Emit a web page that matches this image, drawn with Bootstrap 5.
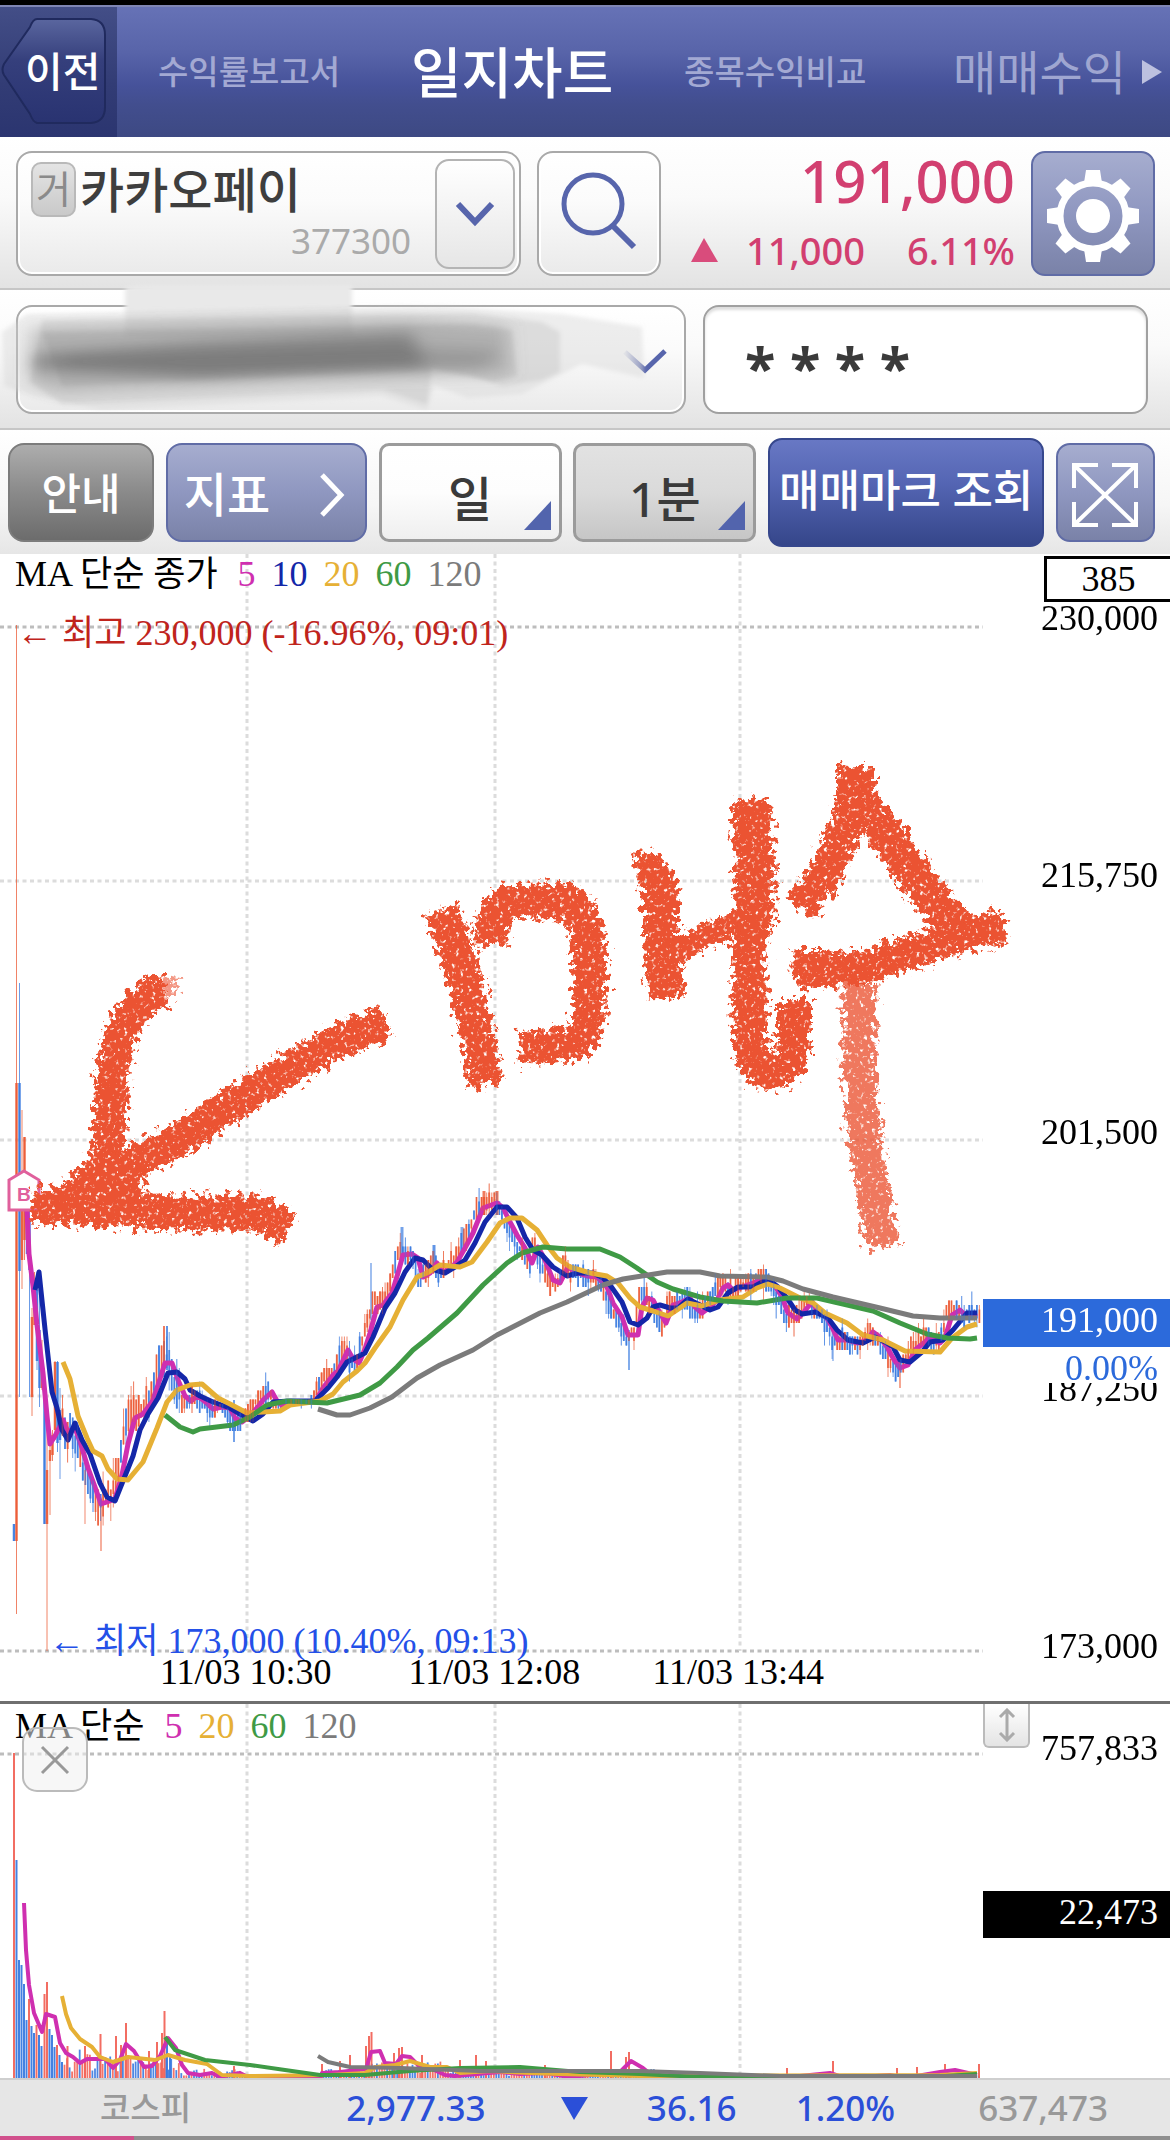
<!DOCTYPE html>
<html lang="ko">
<head>
<meta charset="utf-8">
<meta name="viewport" content="width=device-width, initial-scale=1">
<title>일지차트</title>
<link rel="stylesheet" href="https://cdn.jsdelivr.net/npm/bootstrap@5.3.0/dist/css/bootstrap.min.css">
<style>
  :root{--ui:"Noto Sans","Noto Sans CJK KR",sans-serif;--num:"Liberation Serif","Noto Sans CJK KR",serif}
  body{font-family:var(--ui);background:#fff;color:#333;overflow-x:hidden}
  button,input,select{font-family:inherit}
  .topstrip{height:5px;background:#000}
  .appbar{height:132px;background:linear-gradient(#6672b6 0,#5864a9 35%,#46529a 60%,#424e8e 75%,#3d4983);border-top:2px solid #7f86b4}
  .back-cell{width:117px;height:130px;background:linear-gradient(#434e87,#323c75 60%,#2b3570)}
  .back-btn{width:117px;height:130px;border:0;padding:0 0 0 25px;background:none;color:#fff;font-size:41px;font-weight:500;text-align:left}
  .back-btn svg{position:absolute;left:0;top:0}
  .back-btn span{position:relative;line-height:60px}
  .tabs-row{padding:0 8px 0 41px}
  .tab-sm,.tab-md,.tab-on{text-decoration:none;white-space:nowrap;line-height:60px}
  .tab-sm{font-size:33px;color:#a3a9d3;font-weight:500}
  .tab-md{font-size:47px;color:#9fa6d1}
  .tab-on{font-size:55px;color:#fff;font-weight:500}
  .band{background:linear-gradient(#fff,#fafafa 40%,#e3e3e3);border-bottom:2px solid #c6c6c6}
  .band-quote{height:153px;padding:14px 15px 12px 16px;gap:16px}
  .band-acct{height:140px;padding:15px 22px 14px 16px}
  .band-tools{height:124px;padding:7px 15px 6px 8px;border-bottom:0;background:linear-gradient(#fff,#f6f6f6 60%,#e6e6e6)}
  .bx{border:2px solid #a9a9a9;border-radius:16px;background:linear-gradient(#fff,#fbfbfb 40%,#eaeaea);box-shadow:inset 0 0 0 2px #fff}
  .stock{width:505px;height:125px;padding:0 4px 0 13px}
  .mkt{width:45px;height:55px;border:2px solid #b9b9b9;border-radius:10px;background:linear-gradient(#e4e4e4,#c9c9c9);color:#8a8a8a;font-size:38px;line-height:49px;text-align:center}
  .stock-name{font-size:48px;line-height:55px;color:#3e3e3e;font-weight:500}
  .stock-code{font-size:35px;line-height:48px;color:#aaa}
  .drop{width:80px;height:110px;border:2px solid #b4b4b4;border-radius:14px;background:linear-gradient(#fff,#e6e6e6)}
  .sq{width:124px;height:125px}
  .blue-soft{border:2px solid #606ca6;border-radius:14px;background:linear-gradient(#a6adcf,#8f97c0 50%,#7a82a8);color:#fff}
  .pink{color:#d23f70}
  .price{font-size:58px;line-height:60px;font-weight:500}
  .chg{font-size:38px;line-height:44px;font-weight:500;padding-top:17px;gap:42px}
  .acct{width:670px;height:109px}
  .acct svg{position:absolute;left:-34px;top:-42px;pointer-events:none}
  .pw{width:445px;height:109px;border:2px solid #a0a0a0;border-radius:16px;padding:12px 0 0 40px;font-size:56px;line-height:84px;font-weight:700;color:#3a3a3a;background:#fff;box-shadow:inset 0 3px 3px #ddd}
  .tool{height:99px;font-weight:500;padding:4px 0 0}
  .t-guide{width:146px;font-size:43px;color:#fff;border:2px solid #7c7c7c;border-radius:16px;background:linear-gradient(#adadad,#8d8d8d 45%,#6c6c6c)}
  .t-ind{width:201px;font-size:47px;border-radius:16px}
  .t-sel{width:183px;font-size:48px;color:#3a3a3a;border:3px solid #9b9b9b;border-radius:10px;appearance:none;-webkit-appearance:none;text-align:center;text-align-last:center;padding:12px 0 0}
  .t-day{background:linear-gradient(#fff,#fdfdfd 50%,#efefef)}
  .t-min{background:linear-gradient(#e2e2e2,#dadada 50%,#c6c6c6)}
  .corner{position:absolute;right:11px;bottom:12px;pointer-events:none}
  .t-query{width:276px;height:109px;border:2px solid #36478c;border-radius:14px;font-size:44px;font-weight:500;color:#fff;white-space:nowrap;background:linear-gradient(#6878c4,#5566b4 40%,#35468a);padding:0 0 6px}
  .t-full{width:99px}
  .panel{font-family:var(--num);font-size:36px;line-height:40px;color:#000}
  .ko{font-size:35px}
  .main-chart{height:1147px}
  .vol-chart{height:374px;border-top:0}
  .split{height:3px;background:#6f6f6f}
  .axis{width:187px}
  .plot svg{position:absolute;left:0;top:0;width:100%;height:100%;overflow:visible}
  .over{position:absolute;white-space:nowrap}
  .b-mark{left:17px;top:626px;font:700 19px/30px "Liberation Sans",sans-serif;color:#e0609c}
  .legend-row{position:absolute;left:15px;gap:16px;white-space:nowrap}
  .m5{color:#cf2fb0}.m10{color:#1427a8}.m20{color:#e6b035}.m60{color:#3f9a45}.m120{color:#7b7b7b}
  .axis-list{padding-top:44px}
  .axis-list li{height:257px;padding-right:12px;text-align:right}
  .count-box{position:absolute;left:61px;right:0;top:2px;height:46px;border:3px solid #000;border-right:0;text-align:center;background:#fff}
  .now-box{position:absolute;left:0;right:0;top:745px;height:84px;background:#fff;text-align:right}
  .now-box b{display:block;height:48px;line-height:42px;background:#2c6adb;color:#fff;font-weight:400;padding-right:12px}
  .now-box i{display:block;height:36px;line-height:42px;font-style:normal;color:#2c6adb;padding-right:12px}
  .close-x{left:22px;top:23px;width:66px;height:65px;border:2px solid #bbb;border-radius:15px;background:rgba(240,240,240,.55);padding:0}
  .grip{width:47px;height:44px;border:2px solid #bbb;border-top:0;border-radius:0 0 6px 6px;background:linear-gradient(#fff,#e4e4e4);padding:0}
  .vol-now{top:187px;left:0;right:0;height:47px;line-height:42px;background:#000;color:#fff;text-align:right;padding-right:12px}
  .ticker{height:58px;background:#e6e6e6;border-top:2px solid #cfcfcf;font-size:35px;line-height:56px;padding:0 62px 0 100px;color:#2b4fd8;font-weight:500}
  .ticker .dim{color:#999}
  .idx-name{font-size:33px}
  .bottomstrip{height:4px;background:linear-gradient(90deg,#d1508c 134px,#8f8f8f 134px)}
</style>
</head>
<body>
<div class="topstrip"></div>
<header class="appbar d-flex">
  <div class="back-cell flex-shrink-0">
    <button class="back-btn position-relative" type="button">
      <svg width="117" height="130" viewBox="0 0 117 130"><defs><linearGradient id="bk" x2="0" y2="1"><stop offset="0" stop-color="#5a669f"/><stop offset=".4" stop-color="#353f7c"/><stop offset="1" stop-color="#293371"/></linearGradient></defs><path d="M37 12H91Q105 13 105 28V100Q105 115 91 116H37Q33 115 30 107L4 68Q1 63 4 57L30 20Q33 12 37 12Z" fill="url(#bk)" stroke="#202a5e" stroke-width="2"/></svg>
      <span>이전</span>
    </button>
  </div>
  <nav class="tabs-row d-flex align-items-center justify-content-between flex-grow-1">
    <a class="tab-sm" href="#">수익률보고서</a>
    <a class="tab-on" href="#">일지차트</a>
    <a class="tab-sm" href="#">종목수익비교</a>
    <span class="d-flex align-items-center gap-3 ps-3"><a class="tab-md" href="#">매매수익</a>
    <svg width="20" height="24" viewBox="0 0 20 24"><path d="M0 0L20 12L0 24Z" fill="#bdc1df"/></svg></span>
  </nav>
</header>

<section class="band band-quote d-flex">
  <div class="bx stock d-flex justify-content-between align-items-center">
    <div class="flex-grow-1 pe-4">
      <div class="d-flex align-items-center gap-1"><span class="mkt">거</span><span class="stock-name">카카오페이</span></div>
      <div class="stock-code text-end">377300</div>
    </div>
    <button class="drop" type="button" aria-label="종목 선택"><svg width="40" height="28" viewBox="0 0 40 28"><path d="M3 4L20 22L37 4" fill="none" stroke="#5765ac" stroke-width="6"/></svg></button>
  </div>
  <button class="bx sq p-0" type="button" aria-label="검색"><svg width="80" height="84" viewBox="0 0 80 84"><circle cx="34" cy="32" r="29" fill="none" stroke="#5765ac" stroke-width="5"/><path d="M53 53L75 75" stroke="#5765ac" stroke-width="6"/></svg></button>
  <div class="pink text-end flex-grow-1">
    <div class="price">191,000</div>
    <div class="chg d-flex align-items-center justify-content-end"><span class="d-flex align-items-center gap-4"><svg class="me-1" width="27" height="24" viewBox="0 0 27 24"><path d="M13 0L27 24H0Z" fill="#d94c7c"/></svg>11,000</span><span>6.11%</span></div>
  </div>
  <button class="blue-soft sq p-0" type="button" aria-label="설정">
    <svg width="96" height="96" viewBox="-48 -50 96 96"><g fill="#fff"><g id="tooth"><path d="M-7 -46H7L9 -33H-9Z"/><path d="M-7 46H7L9 33H-9Z"/><path d="M-46 -7V7L-33 9V-9Z"/><path d="M46 -7V7L33 9V-9Z"/></g><use href="#tooth" transform="rotate(45)"/><circle r="17"/></g><circle r="33" fill="none" stroke="#fff" stroke-width="7"/></svg>
  </button>
</section>

<section class="band band-acct d-flex justify-content-between">
  <div class="bx acct position-relative" role="img" aria-label="계좌">
    <svg width="720" height="190" viewBox="-18 263 720 190">
      <defs><filter id="sm" x="-10%" y="-30%" width="120%" height="160%"><feGaussianBlur stdDeviation="9 7"/></filter><filter id="sm2"><feGaussianBlur stdDeviation="2"/></filter>
      <linearGradient id="ck"><stop offset="0" stop-color="#5765ac" stop-opacity=".1"/><stop offset=".5" stop-color="#5765ac"/></linearGradient></defs>
      <path d="M623 350L643 368L663 349" fill="none" stroke="url(#ck)" stroke-width="5"/>
      <path d="M123 287Q125 283 150 283H350V335H123Z" fill="#e9e9e9" filter="url(#sm2)"/>
      <g filter="url(#sm2)"><path d="M25 312L440 304L560 312L640 325L642 376L580 362L520 392L466 396L432 384L425 408L380 394L100 408L30 394L2 384L0 330Z" fill="#d4d4d4" opacity=".4"/>
      <path d="M40 318L470 311L540 320L558 330V370L540 378L500 384L466 372L430 365L425 402L380 388L60 402L28 380Z" fill="#aaa" opacity=".25"/>
      <path d="M40 330L470 322L510 328L515 374L490 380L430 368L60 384Z" fill="#999" opacity=".22"/></g>
      <g filter="url(#sm)"><path d="M28 326L400 316L505 324L508 372L300 378L60 390L28 382Z" fill="#777" opacity=".35"/>
      <path d="M30 352L200 340L410 330L424 366L200 376L30 368Z" fill="#5c5c5c" opacity=".5"/>
      <path d="M60 354L400 344L500 348L480 366L200 372L60 366Z" fill="#666" opacity=".3"/></g>
    </svg>
  </div>
  <input class="pw" type="text" value="* * * *" aria-label="비밀번호">
</section>

<section class="band band-tools d-flex justify-content-between align-items-center">
  <button class="tool t-guide" type="button">안내</button>
  <button class="tool t-ind blue-soft d-flex align-items-center justify-content-between px-3" type="button"><span>지표</span><svg class="me-1" width="26" height="44" viewBox="0 0 26 44"><path d="M3 2L22 22L3 42" fill="none" stroke="#fff" stroke-width="5"/></svg></button>
  <div class="position-relative"><select class="tool t-sel t-day d-block" aria-label="주기"><option>일</option></select><svg class="corner" width="27" height="29" viewBox="0 0 27 29"><path d="M27 0V29H0Z" fill="#5264ad"/></svg></div>
  <div class="position-relative"><select class="tool t-sel t-min d-block" aria-label="분"><option>1분</option></select><svg class="corner" width="27" height="29" viewBox="0 0 27 29"><path d="M27 0V29H0Z" fill="#5264ad"/></svg></div>
  <button class="t-query" type="button">매매마크 조회</button>
  <button class="tool t-full blue-soft" type="button" aria-label="전체화면"><svg width="66" height="64" viewBox="0 0 66 64"><path d="M4 4L62 60M62 4L4 60M2 25V2H26M40 2H64V25M64 39V62H40M26 62H2V39" fill="none" stroke="#fff" stroke-width="4"/></svg></button>
</section>

<main class="panel">
  <section class="main-chart d-flex">
    <div class="plot position-relative flex-grow-1">
      <svg id="priceSvg" viewBox="0 554 983 1147" preserveAspectRatio="none" aria-hidden="true">
        <g fill="none" stroke-dasharray="4 3.5" stroke-width="3">
          <path d="M0 627H983M0 1651H983" stroke="#bdbdbd"/>
          <path d="M0 881H983M0 1140H983M0 1396H983M247 554V1651M495 554V1651M740 554V1651" stroke="#dcdcdc"/>
        </g>
        <g id="candles"></g><g id="priceMa" fill="none" stroke-width="5" stroke-linejoin="round"></g><g id="candlesTop" opacity=".4"></g>
        <path d="M24 1171L39 1180V1210H9V1180Z" fill="#fff" stroke="#e0609c" stroke-width="3"/>
      </svg>
      <span class="over b-mark">B</span>
      <div class="legend-row d-flex" style="top:0"><span class="pe-1">MA <span class="ko">단순 종가</span></span><span class="m5">5</span><span class="m10">10</span><span class="m20">20</span><span class="m60">60</span><span class="m120">120</span></div>
      <div class="over" style="left:17px;top:59px;color:#c0241c">← <span class="ko">최고</span> 230,000 (-16.96%, 09:01)</div>
      <div class="over" style="left:49px;top:1067px;color:#2450e8">← <span class="ko">최저</span> 173,000 (10.40%, 09:13)</div>
      <div class="over translate-middle-x" style="left:25%;top:1098px">11/03 10:30</div>
      <div class="over translate-middle-x" style="left:50.3%;top:1098px">11/03 12:08</div>
      <div class="over translate-middle-x" style="left:75.1%;top:1098px">11/03 13:44</div>
      <svg viewBox="0 554 983 1147" preserveAspectRatio="none" role="img" aria-label="매수">
        <defs><filter id="chalk" filterUnits="userSpaceOnUse" x="0" y="720" width="1040" height="560">
          <feTurbulence type="fractalNoise" baseFrequency=".16" numOctaves="3" seed="4" result="n"/>
          <feDisplacementMap in="SourceGraphic" in2="n" scale="24" xChannelSelector="R" yChannelSelector="G" result="d"/>
          <feTurbulence type="fractalNoise" baseFrequency=".25" numOctaves="2" seed="9"/>
          <feColorMatrix values="0 0 0 0 0  0 0 0 0 0  0 0 0 0 0  5 0 0 0 -.95" result="g"/>
          <feComposite in="d" in2="g" operator="in"/>
        </filter></defs>
        <g filter="url(#chalk)" fill="none" stroke="#eb5230" stroke-width="33" stroke-linejoin="round" stroke-linecap="butt">
          <path d="M165 990Q142 994 126 1024Q111 1055 111 1100L108 1150L103 1195"/>
          <path d="M165 990L177 986" stroke-width="18" opacity=".6"/>
          <path d="M95 1200L140 1159L180 1139L233 1104L306 1060L336 1042L386 1022"/>
          <path d="M32 1205L100 1209L200 1213L262 1213L288 1230" stroke-width="35"/>
          <path d="M62 1202Q88 1190 103 1165L128 1180L108 1206Z"/>
          <path d="M441 910L453 942L466 983L476 1032L486 1086" stroke-width="34"/>
          <path d="M490 944Q492 902 515 902L566 901Q590 917 590 960Q592 1042 575 1044L520 1048" stroke-width="34"/>
          <path d="M636 870Q658 866 661 900L661 940L667 998" stroke-width="36"/>
          <path d="M668 956L708 934L752 919" stroke-width="24"/>
          <path d="M752 800L755 864L753 910L749 953L750 1042Q752 1071 770 1073Q794 1073 794 1040V1000" stroke-width="34"/>
          <path d="M751 803L755 864L754 925" stroke-width="40"/>
          <path d="M800 908L822 880L838 848L853 808L854 766" stroke-width="34"/>
          <path d="M855 766V815" stroke-width="38"/>
          <path d="M855 792L902 858L939 908L970 938" stroke-width="36"/>
          <path d="M809 950V972L861 968L913 952L958 936L1004 926"/>
          <path d="M859 985L859 1060L862 1117L868 1160L882 1246" opacity=".78"/>
        </g>
      </svg>
    </div>
    <aside class="axis flex-shrink-0 position-relative">
      <ul class="axis-list list-unstyled m-0"><li>230,000</li><li>215,750</li><li>201,500</li><li>187,250</li><li>173,000</li></ul>
      <div class="count-box">385</div>
      <div class="now-box"><b>191,000</b><i>0.00%</i></div>
    </aside>
  </section>
  <div class="split"></div>
  <section class="vol-chart d-flex">
    <div class="plot position-relative flex-grow-1">
      <svg viewBox="0 1704 983 374" preserveAspectRatio="none" aria-hidden="true" style="overflow:hidden">
        <g fill="none" stroke-dasharray="4 3.5" stroke-width="3"><path d="M0 1754H983" stroke="#bdbdbd"/><path d="M247 1704V2078M495 1704V2078M740 1704V2078" stroke="#dcdcdc"/></g>
        <g id="bars"></g><g id="volMa" fill="none" stroke-width="4" stroke-linejoin="round"></g>
      </svg>
      <div class="legend-row d-flex" style="top:2px"><span class="pe-1">MA <span class="ko">단순</span></span><span class="m5">5</span><span class="m20">20</span><span class="m60">60</span><span class="m120">120</span></div>
      <button class="close-x position-absolute d-flex align-items-center justify-content-center" type="button" aria-label="닫기"><svg class="position-static" style="width:30px;height:30px" viewBox="0 0 30 30"><path d="M2 2L28 28M28 2L2 28" stroke="#999" stroke-width="3"/></svg></button>
    </div>
    <aside class="axis flex-shrink-0 position-relative">
      <div class="d-flex justify-content-between"><button class="grip" type="button" aria-label="크기 조절"><svg class="d-block mx-auto" width="18" height="34" viewBox="0 0 18 34"><path d="M9 2V32M2 9L9 2L16 9M2 25L9 32L16 25" fill="none" stroke="#aaa" stroke-width="3"/></svg></button><span style="padding:24px 12px 0 0">757,833</span></div>
      <div class="vol-now position-absolute">22,473</div>
    </aside>
  </section>
</main>

<footer class="ticker d-flex justify-content-between align-items-center">
  <span class="idx-name dim">코스피</span>
  <span class="ps-5 ms-5">2,977.33</span>
  <svg class="ms-3" width="27" height="23" viewBox="0 0 27 23"><path d="M0 0H27L13 23Z" fill="#2b4fd8"/></svg>
  <span>36.16</span><span>1.20%</span><span class="dim ps-4">637,473</span>
</footer>
<div class="bottomstrip"></div>

<script>
const C={m5:'#cf2fb0',m10:'#1427a8',m20:'#e6b035',m60:'#3f9a45',m120:'#7b7b7b'};
const price={
m5:'27,1210 29,1254 33,1286 37,1325 43,1373 47,1416 50,1444 55,1436 63,1420 68,1432 75,1428 82,1448 88,1468 95,1487 101,1504 107,1502 115,1499 122,1475 128,1444 135,1418 143,1414 152,1402 158,1385 165,1363 172,1363 178,1380 185,1396 191,1401 197,1396 203,1400 213,1409 222,1407 230,1408 235,1418 242,1422 250,1416 257,1408 263,1400 272,1392 277,1401 283,1406 293,1402 315,1402 323,1388 333,1375 338,1371 348,1350 353,1359 359,1363 365,1349 370,1333 377,1307 383,1305 392,1293 398,1273 403,1255 412,1254 418,1258 423,1277 430,1273 437,1263 442,1272 448,1270 457,1262 465,1248 473,1233 483,1208 497,1203 503,1208 510,1222 517,1235 525,1248 532,1263 538,1247 545,1260 553,1280 560,1283 568,1267 578,1273 587,1276 597,1277 607,1287 613,1303 622,1317 628,1335 638,1335 642,1307 647,1298 653,1300 660,1313 666,1323 673,1305 682,1302 690,1298 695,1307 702,1313 710,1307 717,1300 723,1288 728,1285 733,1290 742,1287 753,1283 767,1278 773,1283 782,1297 788,1313 797,1319 803,1313 812,1302 817,1310 825,1315 832,1327 838,1340 847,1340 858,1343 867,1340 873,1332 880,1337 887,1347 893,1358 900,1368 908,1365 915,1350 925,1342 930,1337 940,1343 945,1338 952,1315 960,1310 967,1317 977,1313',
m10:'35,1290 39,1272 45,1329 52,1392 57,1408 62,1430 68,1440 75,1423 82,1440 90,1454 100,1483 107,1497 115,1501 123,1481 133,1456 140,1430 148,1414 158,1398 168,1373 177,1372 185,1379 190,1390 200,1396 213,1402 230,1408 240,1414 253,1421 263,1414 273,1402 290,1401 315,1401 328,1388 337,1377 347,1362 365,1353 373,1337 385,1308 395,1293 405,1272 415,1258 423,1260 432,1269 445,1273 455,1267 465,1260 475,1243 485,1222 497,1207 507,1207 517,1218 525,1237 533,1250 542,1255 553,1267 567,1276 578,1273 593,1273 603,1278 610,1285 622,1302 630,1322 638,1325 647,1318 653,1307 660,1305 670,1308 678,1308 688,1299 700,1305 710,1310 718,1307 728,1293 738,1287 753,1287 768,1279 778,1287 787,1298 795,1310 802,1314 815,1312 828,1318 837,1330 848,1340 863,1343 875,1337 885,1342 893,1347 900,1360 910,1362 922,1352 930,1342 943,1340 953,1330 967,1313 977,1313',
m20:'63,1362 70,1379 78,1416 87,1438 93,1451 102,1456 108,1469 117,1479 128,1480 143,1462 157,1428 167,1402 177,1390 190,1385 202,1384 218,1398 230,1404 247,1413 263,1412 280,1411 290,1405 320,1401 333,1394 343,1382 357,1371 365,1363 375,1348 390,1327 403,1300 417,1277 427,1273 440,1265 460,1267 472,1262 487,1242 500,1223 510,1218 522,1218 537,1230 547,1245 557,1258 570,1267 590,1273 607,1276 618,1283 630,1298 640,1307 653,1311 668,1316 677,1310 687,1303 702,1306 720,1300 743,1297 757,1288 768,1284 780,1288 800,1298 813,1303 825,1313 847,1323 863,1335 883,1340 905,1351 940,1352 952,1338 967,1327 977,1324',
m60:'165,1415 180,1427 193,1432 200,1429 233,1425 250,1417 267,1405 287,1401 327,1403 360,1395 380,1383 397,1367 413,1350 428,1338 457,1313 483,1285 507,1263 522,1253 543,1247 567,1249 600,1249 620,1257 637,1268 657,1282 673,1289 700,1297 723,1301 757,1303 787,1298 817,1298 843,1304 873,1311 900,1323 927,1334 947,1338 970,1339 977,1338',
m120:'318,1409 337,1415 350,1415 370,1408 392,1397 417,1378 440,1365 473,1350 497,1335 540,1313 567,1302 603,1285 623,1279 667,1272 700,1272 720,1276 767,1277 783,1281 803,1289 833,1297 880,1308 913,1316 940,1318 977,1318'};
const volume={
m5:'24,1903 26,1950 29,1985 34,2013 42,2032 46,2014 55,2017 60,2043 66,2053 73,2057 80,2063 87,2059 105,2059 113,2068 120,2060 126,2044 134,2051 144,2067 152,2066 160,2056 168,2038 176,2048 182,2065 188,2073 200,2075 212,2073 220,2077 240,2073 250,2078 320,2078 322,2073 340,2072 366,2069 371,2052 380,2051 385,2063 396,2064 402,2056 410,2057 420,2067 432,2069 445,2075 455,2076 500,2072 520,2074 545,2073 570,2077 620,2072 631,2061 643,2068 655,2078 780,2078 830,2073 845,2078 890,2075 905,2078 940,2072 955,2070 977,2075',
m20:'62,1996 66,2014 71,2028 80,2039 92,2047 100,2057 113,2062 128,2057 155,2060 168,2055 185,2060 207,2064 222,2075 250,2076 330,2075 365,2073 376,2067 395,2065 410,2061 430,2067 447,2067 460,2073 490,2071 530,2073 560,2074 640,2076 940,2075 977,2073',
m60:'165,2037 175,2050 205,2060 250,2065 285,2070 320,2075 365,2075 410,2071 460,2068 520,2067 580,2072 640,2074 700,2077 930,2077 977,2074',
m120:'318,2056 328,2062 350,2067 400,2068 480,2071 640,2071 700,2073 780,2076 977,2076'};
const line=(k,p)=>`<polyline points="${p}" stroke="${C[k]}"/>`;
const draw=(id,set,order)=>document.getElementById(id).innerHTML=order.map(k=>line(k,set[k])).join('');
draw('priceMa',price,['m5','m10','m20','m60','m120']);
draw('volMa',volume,['m5','m20','m60','m120']);

let seed=7;const rnd=()=>(seed=(seed*16807)%2147483647)/2147483647;
const pts=price.m5.split(' ').map(s=>s.split(',').map(Number));
const at=x=>{let i=1;while(i<pts.length-1&&pts[i][0]<x)i++;const[a,b]=pts[i-1],[c,d]=pts[i];return b+(d-b)*Math.max(0,Math.min(1,(x-a)/(c-a)))};
const RED='#ec5a35',BLUE='#3a7be0';
const bar=(x,t,b,c,w,o)=>`<path d="M${x} ${t}V${b}" stroke="${c}" stroke-width="${w}" opacity="${o}"/>`;
// first minutes of the session: x, wick top, wick bottom, body top, body bottom, up
const open=[[14,1524,1541,1524,1541,0],[16.5,625,1614,1083,1541,1],[19.5,983,1397,1083,1271,0],[22,1110,1289,1180,1260,1],[24.5,1137,1260,1137,1240,1],[27,1180,1254,1200,1254,0],[29.5,1210,1397,1220,1270,0],[32,1308,1416,1317,1397,1],[34.5,1272,1325,1280,1325,1],[37,1272,1370,1290,1361,0],[39.5,1290,1407,1330,1388,0],[42,1340,1390,1370,1388,1],[44.5,1370,1524,1388,1524,0],[47,1410,1651,1470,1524,1],[50,1432,1515,1450,1461,1],[52.5,1430,1461,1435,1455,1],[55,1361,1440,1362,1430,1],[57.5,1361,1452,1362,1443,0],[60,1388,1479,1410,1440,0]];
let low='';
for(const[x,a,b,c,d,u] of open)low+=bar(x,a,b,u?RED:BLUE,1,.75)+bar(x,c,d,u?RED:BLUE,2.5,.9);
let top_='';
for(let x=62.5;x<980;x+=2.54){
  const y=at(x+2),s=at(x+5)-at(x-1),early=x<180?1.7:1,flat=x>270&&x<315?.4:1;
  const up=s<-1?rnd()<.8:s>1?rnd()<.2:rnd()<.5;
  const k=9*early*flat,t=y-k*(.3+rnd())+s*.6,b=y+k*(.3+rnd())+s*.6;
  const wt=t-(rnd()<.4?k*rnd()*1.3:0),wb=b+(rnd()<.4?k*rnd()*1.3:0);
  const q=v=>Math.round(v/4.5)*4.5,c=up?RED:BLUE;
  const g=bar(x.toFixed(1),q(wt),q(wb),c,1,.7)+bar(x.toFixed(1),q(t),q(b),c,1.8,.85);
  low+=g;if(rnd()<.5)top_+=g;
}
low+=bar(101,1500,1551,RED,1.2,.8)+bar(85,1470,1524,RED,1.2,.6)+bar(167,1326,1370,BLUE,2,.8)+bar(164,1326,1365,RED,2,.8)+bar(371,1263,1320,BLUE,1.2,.8)+bar(629,1330,1370,BLUE,1.4,.9)+bar(900,1360,1388,RED,1.2,.9)+bar(833,1330,1361,BLUE,1.2,.7)+bar(234,1400,1442,BLUE,2,.7)+bar(497,1191,1215,RED,3,.8)+bar(484,1191,1215,RED,3,.8)+bar(402,1227,1255,BLUE,3,.7)+bar(434,1245,1270,BLUE,3,.8)+bar(462,1227,1255,BLUE,3,.6);
document.getElementById('candles').innerHTML=low;
document.getElementById('candlesTop').innerHTML=top_;

// tall volume bars: x, top, up
const tall=[[14,1753,1],[16.5,1860,0],[19,1960,0],[21.5,1965,0],[24,1984,0],[26.5,2020,0],[29,1999,1],[31.5,2026,0],[34,2033,0],[36.5,2025,1],[39,2035,0],[41.5,2046,0],[44.5,1994,1],[47,1982,1],[49.5,2029,0],[52,2035,0],[54.5,2047,0],[57,2045,1],[59.5,2055,0],[62,2062,0],[67.5,2046,1],[85,2046,1],[100.5,2034,1],[116,2036,1],[121,2045,1],[126,2023,1],[149,2051,1],[157,2042,1],[162,2033,1],[164.5,2011,1],[167,2041,0],[170,2055,0],[234,2066,1],[322,2064,1],[340,2061,1],[350,2055,1],[366,2046,1],[369,2036,1],[371.5,2032,1],[394,2053,1],[399,2048,1],[402,2047,1],[422,2055,1],[460,2060,1],[476,2055,1],[486,2061,1],[545,2065,1],[611,2051,1],[626,2057,1],[629,2052,1],[787,2068,1],[833,2061,1],[897,2068,1],[917,2067,1],[945,2064,1],[979,2064,1]];
let vb='';
for(let x=64.5;x<980;x+=2.54){const m=x<180?22:x<240?7:x>360&&x<450?13:x>320&&x<660?7:2;vb+=bar(x.toFixed(1),(2078-m*(.3+rnd())).toFixed(1),2078,rnd()<.4?'#f2665a':'#3a7be0',1.8,.9)}
for(const[x,t,u] of tall)vb+=bar(x,t,2078,u?'#f2665a':'#3a7be0',2,.95);
document.getElementById('bars').innerHTML=vb;
</script>
<script src="https://cdn.jsdelivr.net/npm/bootstrap@5.3.0/dist/js/bootstrap.bundle.min.js"></script>
</body>
</html>
